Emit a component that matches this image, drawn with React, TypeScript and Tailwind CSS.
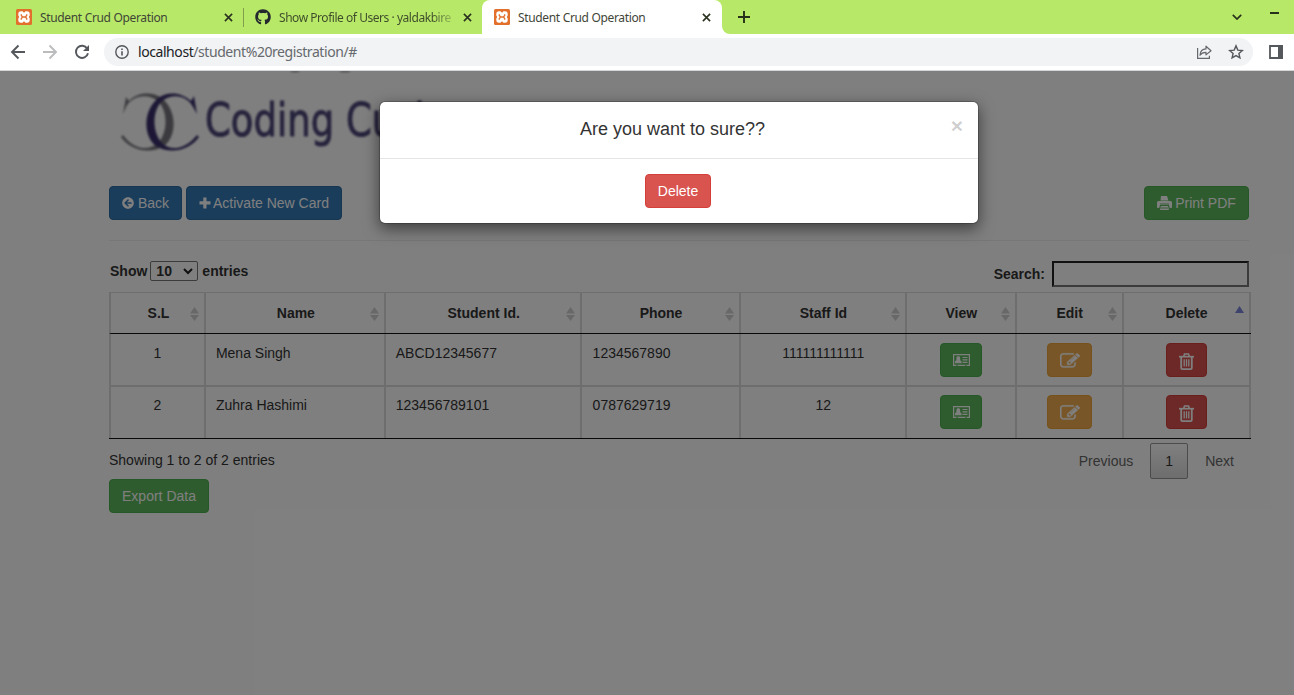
import React from "react";
import { FaGithub, FaArrowCircleLeft } from "react-icons/fa";

const cols = [
  { label: "S.L", w: "w-[95px]" },
  { label: "Name", w: "w-[180px]" },
  { label: "Student Id.", w: "w-[196px]" },
  { label: "Phone", w: "w-[160px]" },
  { label: "Staff Id", w: "w-[166px]" },
  { label: "View", w: "w-[110px]" },
  { label: "Edit", w: "w-[107px]" },
  { label: "Delete", w: "w-[127px]" },
];

const rows = [
  ["1", "Mena Singh", "ABCD12345677", "1234567890", "111111111111"],
  ["2", "Zuhra Hashimi", "123456789101", "0787629719", "12"],
];

function Xampp() {
  return (
    <svg width="16" height="16" viewBox="0 0 16 16" className="shrink-0">
      <rect width="16" height="16" rx="1.5" fill="#e2702c" />
      <path
        d="M5 2.300H6.500L8 3.800 9.500 2.300H11Q13.700 2.300 13.700 5V6.500L12.800 8 13.700 9.500V11Q13.700 13.700 11 13.700H9.500L8 12.200 6.500 13.700H5Q2.300 13.700 2.300 11V9.500L3.200 8 2.300 6.500V5Q2.300 2.300 5 2.300Z"
        fill="#fff"
      />
      <path d="M5.300 5.300V6.400L6.600 8 5.300 9.600v1.100M10.700 5.300V6.400L9.400 8l1.300 1.600v1.100M6 8h4" fill="none" stroke="#e2702c" strokeWidth="1.300" />
    </svg>
  );
}

function Cross() {
  return (
    <svg width="9" height="9" viewBox="0 0 9 9" className="shrink-0">
      <path d="M.9.9l7.200 7.200M8.100.9L.9 8.100" stroke="#2b3320" strokeWidth="1.600" />
    </svg>
  );
}

function TabStrip() {
  return (
    <div className="flex h-[34px] bg-[#b8e868] font-['Noto_Sans',sans-serif] text-[12px] text-[#3c4a2a]">
      <div className="flex w-[243px] items-center pl-4">
        <Xampp />
        <TabTitle />
        <Cross />
      </div>
      <div className="mt-2 h-[19px] w-px bg-[#7f9f4c]" />
      <div className="flex w-[238px] items-center pl-[11px]">
        <FaGithub size={16} className="shrink-0 text-[#24292e]" />
        <span className="ml-2 mr-[9px] w-[175px] whitespace-nowrap bg-linear-to-r from-[#3c4a2a] from-87% to-[#3c4a2a]/20 bg-clip-text pt-px tracking-[-0.46px] text-transparent">
          Show Profile of Users · yaldakbire
        </span>
        <Cross />
      </div>
      <div className="relative flex w-[240px] items-center rounded-t-[8px] bg-white pl-3">
        <Xampp />
        <TabTitle />
        <Cross />
      </div>
      <div className="flex flex-1 bg-white">
        <div className="flex flex-1 items-center rounded-bl-[8px] bg-[#b8e868] pl-4">
          <svg width="12" height="12" viewBox="0 0 12 12">
            <path d="M6 0v12M0 6h12" stroke="#26301a" strokeWidth="1.900" />
          </svg>
          <svg width="10" height="6" viewBox="0 0 10 6" className="ml-auto">
            <path d="M.8.8L5 5 9.200.8" fill="none" stroke="#26301a" strokeWidth="1.700" />
          </svg>
          <div className="-mt-[9px] ml-7 mr-[15px] h-[2px] w-[9px] bg-[#26301a]" />
        </div>
      </div>
    </div>
  );
}

function TabTitle() {
  return <span className="ml-2 w-[184px] whitespace-nowrap pt-px tracking-[-0.34px] text-[#3f4637]">Student Crud Operation</span>;
}

function Toolbar() {
  return (
    <div className="flex h-[37px] items-center border-b border-[#d5d6d8] bg-white pl-[10px]">
      <svg width="16" height="16" viewBox="0 0 16 16">
        <path d="M15 8H2M8.500 1.500L2 8l6.500 6.500" fill="none" stroke="#54575b" strokeWidth="1.900" />
      </svg>
      <svg width="16" height="16" viewBox="0 0 16 16" className="ml-4">
        <path d="M1 8h13M7.500 1.500L14 8l-6.500 6.500" fill="none" stroke="#babcbe" strokeWidth="1.900" />
      </svg>
      <svg width="16" height="16" viewBox="0 0 16 16" className="ml-4">
        <path d="M13.200 4.500A6.100 6.100 0 1 0 14 9.200" fill="none" stroke="#54575b" strokeWidth="1.900" />
        <path d="M15 1v6H9Z" fill="#54575b" />
      </svg>
      <div className="ml-[14px] flex h-7 w-[1149px] items-center rounded-full bg-[#f1f3f4] pl-[11px]">
        <svg width="14" height="14" viewBox="0 0 14 14">
          <circle cx="7" cy="7" r="6.200" fill="none" stroke="#54575b" strokeWidth="1.400" />
          <path d="M7 6.200v4.300M7 3.400v1.600" stroke="#54575b" strokeWidth="1.600" />
        </svg>
        <span className="ml-[9px] whitespace-nowrap pb-px font-['Noto_Sans',sans-serif] text-[14px] tracking-[-0.43px] text-[#66696d]">
          <span className="text-[#202124]">localhost</span>/student%20registration/#
        </span>
        <svg width="16" height="16" viewBox="0 0 16 16" className="ml-auto" fill="none" stroke="#65686c" strokeWidth="1.200">
          <path d="M1.600 4v10.300h11.800v-2.600" />
          <path d="M4 11.200C4.300 7 6.700 5 10 4.900V2.200L15 6.700l-5 4.200V8.300C7.500 8.200 5.500 9 4 11.200Z" strokeLinejoin="round" />
        </svg>
        <svg width="16" height="16" viewBox="0 0 16 16" className="ml-4 mr-[9px]">
          <path d="M8 1.900l1.800 4.200 4.500.4-3.400 3 1 4.400L8 11.600l-3.900 2.300 1-4.400-3.400-3 4.500-.4Z" fill="none" stroke="#54575b" strokeWidth="1.400" />
        </svg>
      </div>
      <svg width="14" height="14" viewBox="0 0 14 14" className="ml-4">
        <path d="M1 1h12v12H1Z" fill="none" stroke="#54575b" strokeWidth="1.800" />
        <path d="M9 0h5v14H9Z" fill="#54575b" />
      </svg>
    </div>
  );
}

function Logo() {
  return (
    <svg width="420" height="96" viewBox="109 71 420 96" className="block blur-[0.8px]">
      <g fill="#5a5a68">
        <ellipse cx="295" cy="70.500" rx="5" ry="1.600" />
        <ellipse cx="345" cy="70.500" rx="6" ry="1.600" />
      </g>
      <path fill="#77747c" d="M123 114L126 97L129 101C137 92 153 91 163 99C178 113 176 137 164 146C150 155 130 150 121 137L123 135C133 149 148 152 158 143C168 132 168 111 158 101C148 93 132 95 126 107Z" />
      <path fill="#3a2f6b" d="M197 114L194 96L191 101C181 92 167 91 157 99C142 113 144 137 156 146C170 155 190 150 199 137L197 135C186 149 171 152 162 143C152 132 152 111 162 101C172 93 187 95 193 107Z" />
      <text x="205" y="136" textLength="233" lengthAdjust="spacingAndGlyphs" fill="#4b4578" stroke="#4b4578" strokeWidth="1" className="font-['DejaVu_Sans',sans-serif] text-[46px]">Coding Cush</text>
    </svg>
  );
}

function PlusIcon() {
  return (
    <svg width="12" height="12" viewBox="0 0 12 12">
      <path d="M4.300.500h3.200v3.800h4v3.200h-4v4H4.300v-4H.500V4.300h3.800Z" fill="#fff" />
    </svg>
  );
}

function PrintIcon() {
  return (
    <svg width="15" height="14" viewBox="0 0 15 14">
      <path d="M4 0h6l1.500 4.500h-8ZM1.500 5h12Q15 5 15 6.500V11q0 1-1 1h-1.200L12 9H3l-.8 3H1q-1 0-1-1V6.500Q0 5 1.500 5ZM3.900 10h7.200l.8 4H3.100Z" fill="#fff" />
      <path d="M3 8h9M4 12h7" stroke="#5cb85c" strokeWidth=".9" />
    </svg>
  );
}

function SortIcon({ active }: { active?: boolean }) {
  return active ? (
    <svg width="9" height="7" viewBox="0 0 9 7" className="absolute right-[5px] top-[13px]">
      <path d="M0 7L4.500 0 9 7Z" fill="#7c86dc" />
    </svg>
  ) : (
    <svg width="9" height="14" viewBox="0 0 9 14" className="absolute right-[5px] top-[14px]">
      <path d="M0 6.400L4.500 0 9 6.400ZM0 8h9L4.500 14Z" fill="#d1d1d1" />
    </svg>
  );
}

function ViewIcon() {
  return (
    <svg width="17" height="12" viewBox="0 0 17 12">
      <path d="M.6.6h15.800v10.800H.6Z" fill="none" stroke="#fff" strokeWidth="1.200" />
      <path d="M2 9.200V7.300l1.400-1V4.200C3.500 2.800 4 2.200 5.300 2.200S7.100 2.800 7.200 4.200v2.100l1.400 1v1.900Z" fill="#fff" />
      <path d="M9.500 3.500h5M9.500 5.900h5M9.500 8.300h5" stroke="#fff" strokeWidth="1.200" />
      <path d="M3.500 11.400h1.200M12.300 11.400h1.200" stroke="#5cb85c" strokeWidth="1.300" />
    </svg>
  );
}

function EditIcon() {
  return (
    <svg width="20" height="18" viewBox="0 0 1792 1792" preserveAspectRatio="none" className="mt-px">
      <path fill="#fff" stroke="#fff" strokeWidth="30" d="M888 1184l116-116-152-152-116 116v56h96v96h56zm440-720q-16-16-33 1l-350 350q-17 17-1 33t33-1l350-350q17-17 1-33zm80 594v190q0 119-84.500 203.500t-203.500 84.500h-832q-119 0-203.500-84.500t-84.500-203.500v-832q0-119 84.500-203.500t203.500-84.500h832q63 0 117 25 15 7 18 23 3 17-9 29l-49 49q-14 14-32 8-23-6-45-6h-832q-66 0-113 47t-47 113v832q0 66 47 113t113 47h832q66 0 113-47t47-113v-126q0-13 9-22l64-64q15-15 35-7t20 29zm-96-738l288 288-672 672h-288v-288zm444 132l-92 92-288-288 92-92q28-28 68-28t68 28l152 152q28 28 28 68t-28 68z" />
    </svg>
  );
}

function TrashIcon() {
  return (
    <svg width="15" height="17" viewBox="0 0 15 17" fill="none" stroke="#fff">
      <path d="M0 3.700h15" strokeWidth="1.700" />
      <path d="M4.700 3.500L5.500 1h4l.8 2.500" strokeWidth="1.600" />
      <path d="M2.200 4v11q0 1.100 1.100 1.100h8.400q1.100 0 1.100-1.100V4" strokeWidth="1.800" />
      <path d="M5.200 6.300v7.200M7.500 6.300v7.200M9.800 6.300v7.200" strokeWidth="1.300" />
    </svg>
  );
}

const btn = "flex h-[34px] items-center justify-center rounded-[4px] border text-white whitespace-nowrap";
const cell = "border-r-2 border-[#dddddd]";
const headPad = ["pl-[2px]", "pl-[2px]", "pl-[2px]", "pl-px", "", "", "", ""];
const bodyPad = ["", "pl-[10px] text-left", "pl-[10px] text-left", "pl-[11px] text-left", ""];

export default function App() {
  return (
    <div className="flex h-[695px] w-[1294px] flex-col overflow-hidden bg-white">
      <TabStrip />
      <Toolbar />
      <div className="relative flex-1 overflow-hidden font-['Liberation_Sans',Arial,sans-serif] text-[14px] leading-5 text-[#333]">
        <div className="ml-[109px] w-[1142px]">
          <Logo />
          <div className="mt-[19px] flex w-[1140px] gap-1">
            <button className={`${btn} w-[73px] gap-1 border-[#2e6da4] bg-[#337ab7]`}>
              <FaArrowCircleLeft size={12} />Back
            </button>
            <button className={`${btn} w-[156px] gap-[2px] border-[#2e6da4] bg-[#337ab7]`}>
              <PlusIcon />Activate New Card
            </button>
            <button className={`${btn} ml-auto w-[105px] gap-[3px] border-[#4cae4c] bg-[#5cb85c]`}>
              <PrintIcon />Print PDF
            </button>
          </div>
          <div className="mt-5 h-px w-[1140px] bg-[#eeeeee]" />
          <div className="flex h-[51px] w-[1140px] items-start justify-between pt-5 font-bold">
            <div className="flex items-center pl-px">
              Show
              <div className="ml-[3px] mr-1 flex h-5 w-12 items-center justify-between rounded-[2px] border border-[#767676] pl-[5px] pr-1">
                10
                <svg width="10" height="7" viewBox="0 0 10 7">
                  <path d="M1 1l4 4 4-4" fill="none" stroke="#222" strokeWidth="2" />
                </svg>
              </div>
              entries
            </div>
            <div className="flex items-center gap-[7px]">
              Search:
              <div className="h-[26px] w-[197px] border-2 border-b-[#767676] border-l-[#222] border-r-[#767676] border-t-[#222]" />
            </div>
          </div>
          <div className="border-b border-[#111] text-center">
            <div className="flex h-[42px] border-b border-l-2 border-t border-b-[#111] border-l-[#ddd] border-t-[#ddd] font-bold">
              {cols.map((c, i) => (
                <div key={c.label} className={`${cell} ${c.w} ${headPad[i]} relative pt-[10px]`}>
                  {c.label}
                  <SortIcon active={i === 7} />
                </div>
              ))}
            </div>
            {rows.map((r, n) => {
              const top = n === 0 ? "pt-[9px]" : "pt-2";
              return (
                <div key={r[0]} className={`flex border-l-2 border-[#ddd] ${n === 0 ? "h-[53px] border-b-2" : "h-[51px]"}`}>
                  {r.map((t, i) => (
                    <div key={i} className={`${cell} ${cols[i].w} ${top} ${bodyPad[i]}`}>{t}</div>
                  ))}
                  <div className={`${cell} ${cols[5].w} ${top} flex justify-center`}>
                    <button className={`${btn} w-[42px] border-[#4cae4c] bg-[#5cb85c]`}><ViewIcon /></button>
                  </div>
                  <div className={`${cell} ${cols[6].w} ${top} flex justify-center`}>
                    <button className={`${btn} w-[45px] border-[#eea236] bg-[#f0ad4e]`}><EditIcon /></button>
                  </div>
                  <div className={`${cell} ${cols[7].w} ${top} flex justify-center`}>
                    <button className={`${btn} w-[41px] border-[#d43f3a] bg-[#d9534f] pt-[3px]`}><TrashIcon /></button>
                  </div>
                </div>
              );
            })}
          </div>
          <div className="flex h-10 w-[1140px] items-start justify-between">
            <span className="pt-[11px]">Showing 1 to 2 of 2 entries</span>
            <div className="flex items-center pr-[15px] pt-1 text-[#666]">
              Previous
              <div className="ml-[17px] mr-[17px] flex h-9 w-[38px] items-center justify-center rounded-[2px] border border-[#979797] bg-linear-to-b from-white to-[#dcdcdc] text-[#333]">1</div>
              Next
            </div>
          </div>
          <button className={`${btn} w-[100px] border-[#4cae4c] bg-[#5cb85c]`}>Export Data</button>
        </div>
        <div className="absolute inset-0 flex items-start bg-black/50 pl-[379px] pt-[30px]">
          <div className="h-[123px] w-[600px] rounded-[6px] border border-black/20 bg-white bg-clip-padding shadow-[0_5px_15px_rgba(0,0,0,0.5)]">
            <div className="relative flex h-[57px] items-center justify-center border-b border-[#e5e5e5] pb-[3px] text-[18px]">
              <h4 className="-ml-[13px]">Are you want to sure??</h4>
              <span className="absolute right-[15px] top-[14px] text-[21px] font-bold text-black/20">×</span>
            </div>
            <div className="flex justify-center pr-[2px] pt-[15px]">
              <button className={`${btn} w-[66px] border-[#d43f3a] bg-[#d9534f]`}>Delete</button>
            </div>
          </div>
        </div>
      </div>
    </div>
  );
}
